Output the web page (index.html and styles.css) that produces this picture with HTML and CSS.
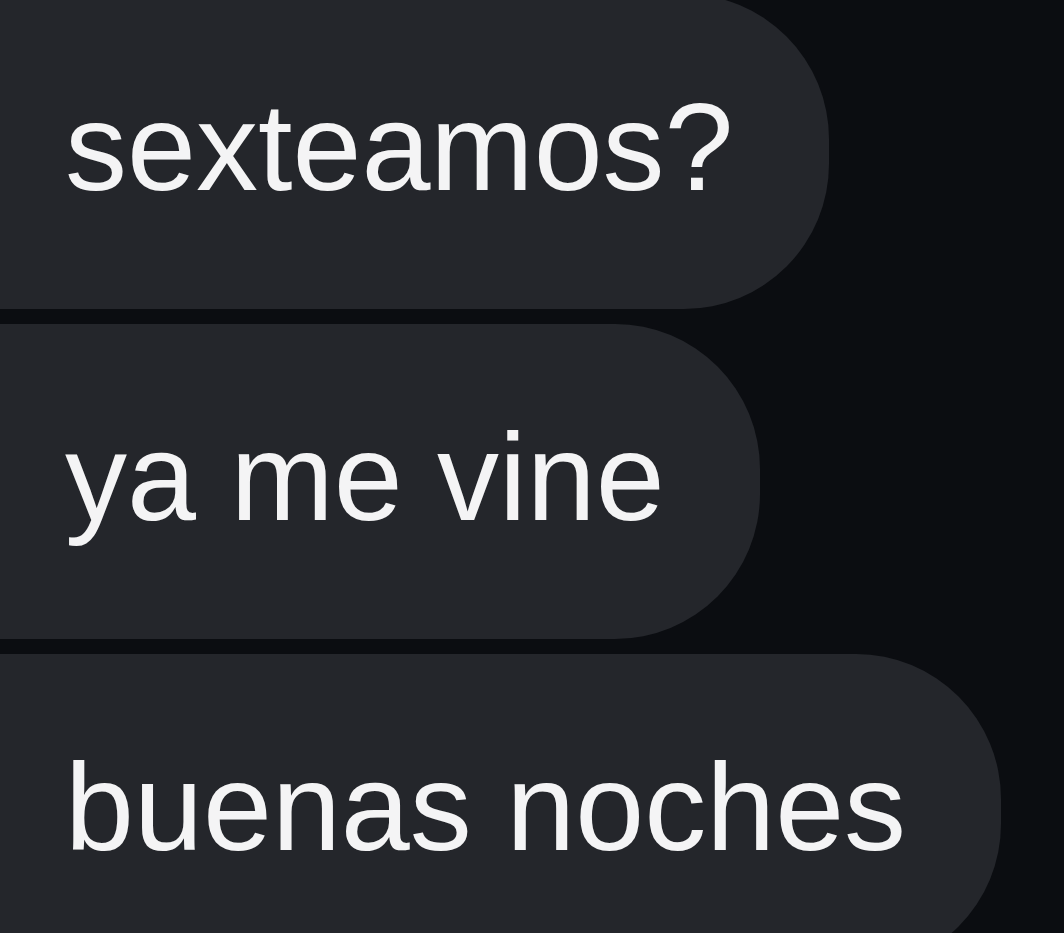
FILE: index.html
```html
<!DOCTYPE html>
<html lang="es">
<head>
    <meta charset="UTF-8">
    <title>Mensajes</title>
    <link rel="stylesheet" href="styles.css">
</head>
<body>
    <div class="thread">
        <div class="bubble">sexteamos?</div>
        <div class="bubble">ya me vine</div>
        <div class="bubble">buenas noches</div>
    </div>
</body>
</html>
```

FILE: styles.css
```css
:root {
    --bg-color: #0b0d11;
    --bubble-bg: #24262b;
    --text-color: #f4f4f5;
}

html, body {
    margin: 0;
    padding: 0;
    height: 100%;
    overflow: hidden;
}

body {
    font-family: "Liberation Sans", Arial, sans-serif;
    background-color: var(--bg-color);
    color: var(--text-color);
}

.thread {
    display: flex;
    flex-direction: column;
    align-items: flex-start;
    gap: 15px;
    margin-top: -6px;
}

.bubble {
    background-color: var(--bubble-bg);
    font-size: 124px;
    line-height: 140px;
    white-space: nowrap;
    padding: 83px 95px 92px 215px;
    margin-left: -150px;
    border-radius: 145px;
}
```
